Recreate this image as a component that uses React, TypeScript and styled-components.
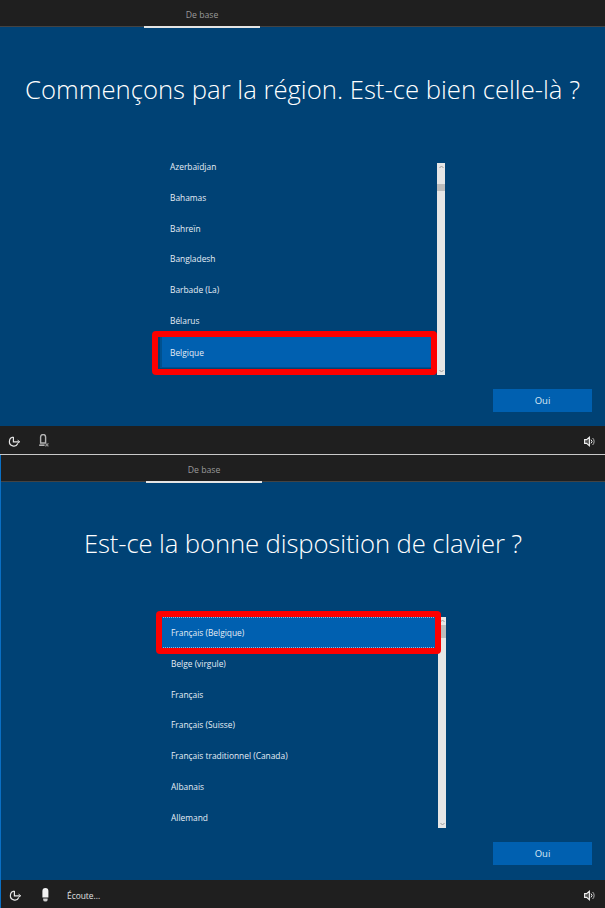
import styled, { createGlobalStyle } from "styled-components";

const GlobalStyle = createGlobalStyle`
  html, body {
    margin: 0;
    padding: 0;
    background: #1f1f1f;
  }
  body {
    font-family: "Open Sans", "Liberation Sans", sans-serif;
    overflow: hidden;
  }
`;

const EaseIcon = () => (
  <svg width="13" height="13" viewBox="0 0 13 13" fill="none" stroke="#e6e6e6" strokeWidth="1.2">
    <path d="M5.4 2.2A4.4 4.4 0 1 0 9.8 8.4" />
    <path d="M5.4 2V6.8H10.8" />
    <path d="M9.6 5.2L11.8 6.8L9.6 8.2" strokeWidth="1" />
  </svg>
);

const MicOutline = () => (
  <svg width="13" height="14" viewBox="0 0 13 14" fill="none">
    <path d="M2.6 3a2.5 2.5 0 0 1 5 0V9H2.6z" stroke="#b4b4b4" strokeWidth="1.4" />
    <path d="M1.2 11.2H6.6" stroke="#b4b4b4" strokeWidth="1.6" />
    <path d="M7.4 9.4l3 3M10.4 9.4l-3 3" stroke="#8f8f8f" strokeWidth="1.3" />
  </svg>
);

const MicFilled = () => (
  <svg width="13" height="14" viewBox="0 0 13 14">
    <path d="M3.4 3a3 3 0 0 1 6 0V9.6H3.4z" fill="#f2f2f2" />
    <path d="M4.2 10.6h4.4v1.4a2.2 1.6 0 0 1-4.4 0z" fill="#cfcfcf" />
  </svg>
);

const SpeakerIcon = () => (
  <svg width="11" height="11" viewBox="0 0 11 11" fill="none">
    <path d="M.6 3.6H2.6L5.4 1.2V9.8L2.6 7.4H.6z" stroke="#f0f0f0" strokeWidth="1.1" fill="#555" />
    <path d="M7 3.6a2.6 2.6 0 0 1 0 3.8" stroke="#ececec" strokeWidth="1" />
    <path d="M8.6 2a4.8 4.8 0 0 1 0 7" stroke="#b9b9b9" strokeWidth="1" />
  </svg>
);

const ArrowUp = () => (
  <svg width="5" height="4" viewBox="0 0 5 4" fill="none" stroke="#9a9a9a" strokeWidth="1">
    <path d="M.5 3L2.5 1L4.5 3" />
  </svg>
);

const ArrowDown = () => (
  <svg width="5" height="4" viewBox="0 0 5 4" fill="none" stroke="#9a9a9a" strokeWidth="1">
    <path d="M.5 1L2.5 3L4.5 1" />
  </svg>
);

const regions = ["Azerbaïdjan", "Bahamas", "Bahreïn", "Bangladesh", "Barbade (La)", "Bélarus", "Belgique"];
const layouts = [
  "Français (Belgique)",
  "Belge (virgule)",
  "Français",
  "Français (Suisse)",
  "Français traditionnel (Canada)",
  "Albanais",
  "Allemand",
];

const App = () => {
  return (
    <Page>
      <GlobalStyle />
      <Screen $height={454}>
        <TopBar>
          <Tab $left={144} $width={116}>De base</Tab>
        </TopBar>
        <Main>
          <Title $top={47}>Commençons par la région. Est-ce bien celle-là ?</Title>
          <ListRow $left={160} $top={57} $height={212}>
            <List $scroll={12}>
              {regions.map((name) => (
                <Item key={name} $selected={name === "Belgique"} $marked={name === "Belgique"}>
                  {name}
                </Item>
              ))}
            </List>
            <Scrollbar>
              <ArrowUp />
              <Thumb $top={19} $size={7} />
              <ArrowDown />
            </Scrollbar>
          </ListRow>
          <ButtonRow>
            <Button>Oui</Button>
          </ButtonRow>
        </Main>
        <Footer>
          <IconSlot><EaseIcon /></IconSlot>
          <IconSlot><MicOutline /></IconSlot>
          <Volume><SpeakerIcon /></Volume>
        </Footer>
      </Screen>
      <Divider />
      <Screen $height={453} $edge>
        <TopBar>
          <Tab $left={145} $width={116}>De base</Tab>
        </TopBar>
        <Main>
          <Title $top={46} $tight>Est-ce la bonne disposition de clavier ?</Title>
          <ListRow $left={160} $top={57} $height={211}>
            <List>
              {layouts.map((name) => (
                <Item key={name} $selected={name === "Français (Belgique)"} $focused={name === "Français (Belgique)"}>
                  {name}
                </Item>
              ))}
            </List>
            <Scrollbar>
              <ArrowUp />
              <Thumb $top={6} $size={13} />
              <ArrowDown />
            </Scrollbar>
          </ListRow>
          <ButtonRow>
            <Button>Oui</Button>
          </ButtonRow>
        </Main>
        <Footer>
          <IconSlot><EaseIcon /></IconSlot>
          <IconSlot><MicFilled /></IconSlot>
          <Listening>Écoute...</Listening>
          <Volume><SpeakerIcon /></Volume>
        </Footer>
      </Screen>
    </Page>
  );
};

export default App;

const Page = styled.div`
  width: 605px;
  height: 908px;
  display: flex;
  flex-direction: column;
  overflow: hidden;
`;

const Screen = styled.div<{ $height: number; $edge?: boolean }>`
  height: ${(p) => p.$height}px;
  flex: none;
  display: flex;
  flex-direction: column;
  box-sizing: border-box;
  border-left: ${(p) => (p.$edge ? "1px solid #0a6fc4" : "none")};
`;

const Divider = styled.div`
  height: 1px;
  flex: none;
  background: #c9c9c9;
`;

const TopBar = styled.div`
  height: 27px;
  flex: none;
  box-sizing: border-box;
  background: #1f1f1f;
  border-bottom: 1px solid #434343;
`;

const Tab = styled.div<{ $left: number; $width: number }>`
  position: relative;
  margin-left: ${(p) => p.$left}px;
  width: ${(p) => p.$width}px;
  height: 28px;
  box-sizing: border-box;
  border-bottom: 2px solid #e4e4e4;
  color: #9a9a9a;
  font-size: 8.7px;
  line-height: 31px;
  text-align: center;
`;

const Main = styled.div`
  flex: 1;
  min-height: 0;
  display: flex;
  flex-direction: column;
  background: #004275;
`;

const Title = styled.h1<{ $top: number; $tight?: boolean }>`
  margin: ${(p) => p.$top}px 0 0;
  height: 32px;
  color: #fff;
  font-size: 25.7px;
  font-weight: 300;
  line-height: 32px;
  letter-spacing: ${(p) => (p.$tight ? "-0.12px" : "0")};
  text-align: center;
  white-space: nowrap;
`;

const ListRow = styled.div<{ $left: number; $top: number; $height: number }>`
  margin: ${(p) => p.$top}px 0 0 ${(p) => p.$left}px;
  height: ${(p) => p.$height}px;
  display: flex;
`;

const List = styled.div<{ $scroll?: number }>`
  width: 277px;
  display: flex;
  flex-direction: column;
  margin-top: ${(p) => -(p.$scroll ?? 0)}px;
`;

const Item = styled.div<{ $selected?: boolean; $marked?: boolean; $focused?: boolean }>`
  height: 30.75px;
  flex: none;
  box-sizing: border-box;
  position: relative;
  padding: 1px 0 0 10px;
  color: #e6eef5;
  font-size: 8.4px;
  line-height: 30px;
  background: ${(p) => (p.$selected ? "#0060b0" : "transparent")};
  margin-top: ${(p) => (p.$marked ? "1.5px" : "0")};
  outline: ${(p) => (p.$focused ? "1px dotted rgba(255, 255, 255, 0.55)" : "none")};
  outline-offset: -1px;
  box-shadow: ${(p) => (p.$marked ? "inset 2px -1px 0 #00518f" : "none")};

  &::after {
    content: "";
    display: ${(p) => (p.$marked || p.$focused ? "block" : "none")};
    position: absolute;
    z-index: 1;
    box-sizing: border-box;
    left: ${(p) => (p.$focused ? "-5px" : "-8px")};
    right: ${(p) => (p.$focused ? "-3px" : "0")};
    top: -6px;
    bottom: ${(p) => (p.$focused ? "-6px" : "-7px")};
    border: 6px solid #fd0000;
    border-radius: 4px;
  }
`;

const Scrollbar = styled.div`
  width: 8px;
  background: #e6e6e6;
  position: relative;
  display: flex;
  flex-direction: column;
  align-items: center;
  justify-content: space-between;
  padding: 2px 0;
  box-sizing: border-box;
`;

const Thumb = styled.div<{ $top: number; $size: number }>`
  position: absolute;
  left: 0;
  top: ${(p) => p.$top + 2}px;
  width: 8px;
  height: ${(p) => p.$size}px;
  background: #bdbdbd;
`;

const ButtonRow = styled.div`
  margin-top: 14px;
  padding-right: 13px;
  display: flex;
  justify-content: flex-end;
`;

const Button = styled.button`
  width: 99px;
  height: 23px;
  padding: 0;
  border: none;
  background: #0060b0;
  color: #dbe9f5;
  font-family: inherit;
  font-size: 9.5px;
`;

const Footer = styled.div`
  height: 28px;
  flex: none;
  box-sizing: border-box;
  display: flex;
  align-items: center;
  padding: 2px 10px 0 8px;
  background: #1f1f1f;
`;

const IconSlot = styled.div`
  width: 30px;
  display: flex;
  align-items: center;
`;

const Listening = styled.div`
  margin-left: -2px;
  color: #e0e0e0;
  font-size: 8.4px;
`;

const Volume = styled.div`
  margin-left: auto;
  display: flex;
`;
